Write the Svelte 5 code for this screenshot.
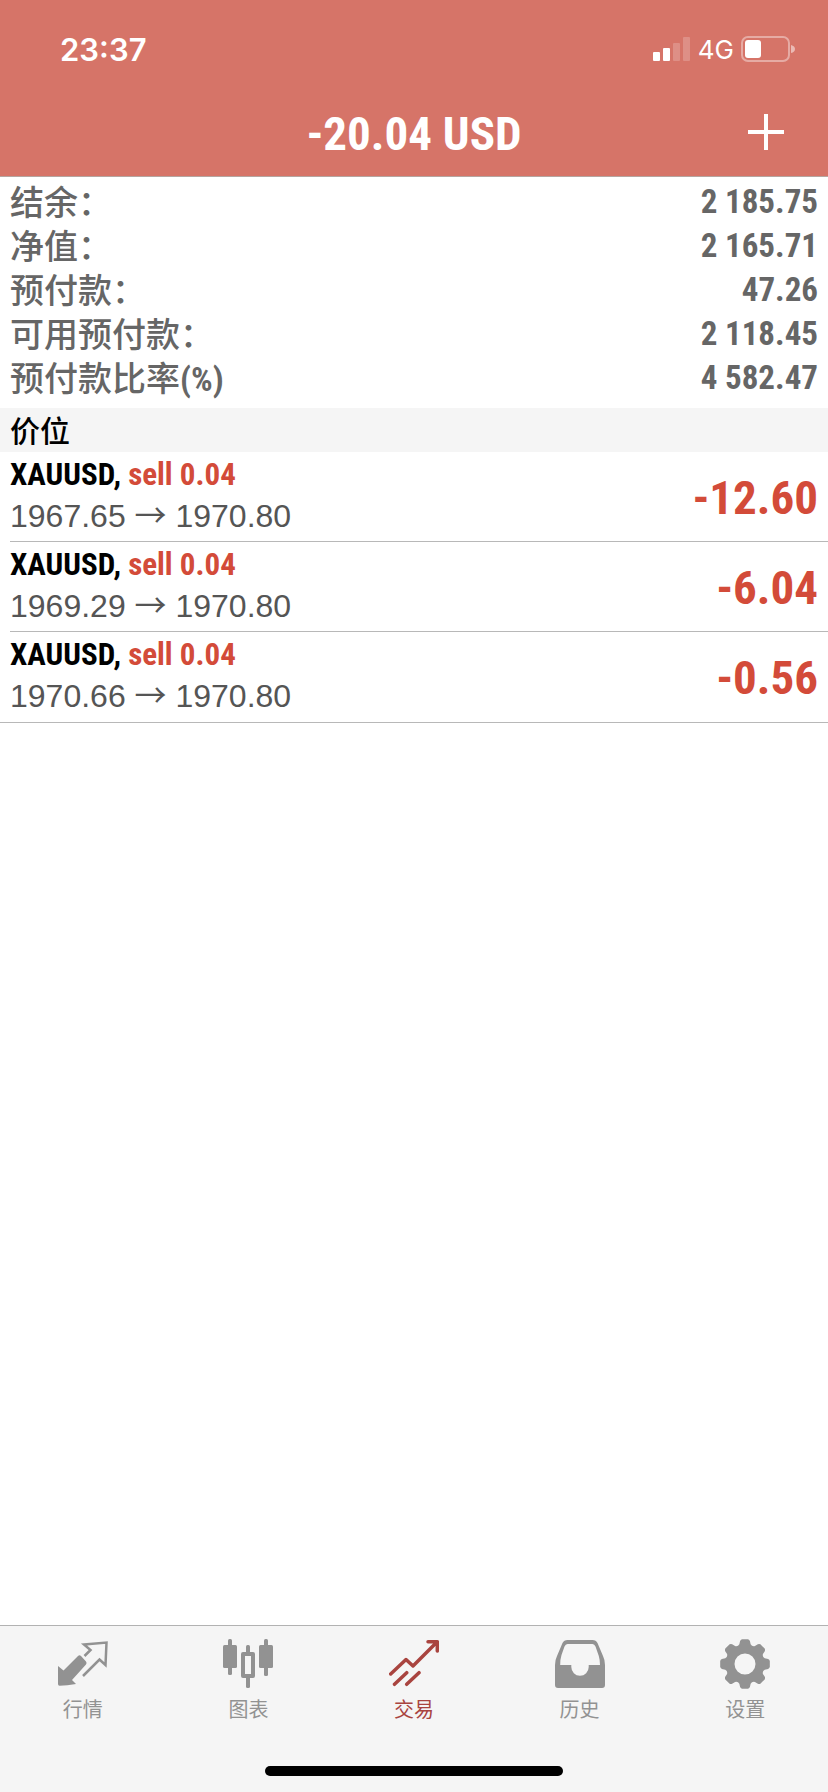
<script>
  const summary = [
    { label: '结余：', value: '2 185.75' },
    { label: '净值：', value: '2 165.71' },
    { label: '预付款：', value: '47.26' },
    { label: '可用预付款：', value: '2 118.45' },
    { label: '预付款比率', unit: '(%)', value: '4 582.47' }
  ];

  const positions = [
    { symbol: 'XAUUSD', side: 'sell', volume: '0.04', open: '1967.65', current: '1970.80', profit: '-12.60' },
    { symbol: 'XAUUSD', side: 'sell', volume: '0.04', open: '1969.29', current: '1970.80', profit: '-6.04' },
    { symbol: 'XAUUSD', side: 'sell', volume: '0.04', open: '1970.66', current: '1970.80', profit: '-0.56' }
  ];

  const tabs = [
    { id: 'quotes', label: '行情' },
    { id: 'charts', label: '图表' },
    { id: 'trade', label: '交易' },
    { id: 'history', label: '历史' },
    { id: 'settings', label: '设置' }
  ];

  let active = $state('trade');

  // Outline of an eight-toothed gear centred in a 50 x 50 box.
  function gearPath() {
    const at = (deg, r) => {
      const a = (deg * Math.PI) / 180;
      return `${(25 + r * Math.cos(a)).toFixed(2)} ${(25 + r * Math.sin(a)).toFixed(2)}`;
    };
    let d = '';
    for (let i = 0; i < 8; i++) {
      const c = i * 45;
      d += `${i ? 'L' : 'M'}${at(c - 16, 20.5)}L${at(c - 12, 23.6)}Q${at(c - 10, 24.8)} ${at(c - 7, 25)}`;
      d += `L${at(c + 7, 25)}Q${at(c + 10, 24.8)} ${at(c + 12, 23.6)}L${at(c + 16, 20.5)}`;
      d += `Q${at(c + 22.5, 18.6)} ${at(c + 29, 20.5)}`;
    }
    return d + 'ZM35.5 25a10.5 10.5 0 1 0-21 0a10.5 10.5 0 1 0 21 0Z';
  }
</script>

<div class="app">
  <header>
    <div class="status">
      <span class="time">23:37</span>
      <div class="indicators">
        <svg width="38" height="24" viewBox="0 0 38 24" fill="#fff" aria-hidden="true">
          <rect x="0" y="15" width="7" height="9" rx="1" />
          <rect x="10" y="11" width="7" height="13" rx="1" />
          <rect x="20" y="6" width="7" height="18" rx="1" opacity=".2" />
          <rect x="30" y="0" width="7" height="24" rx="1" opacity=".2" />
        </svg>
        <span class="network">4G</span>
        <svg width="54" height="26" viewBox="0 0 54 26" fill="#fff" aria-hidden="true">
          <rect x="1" y="1" width="47" height="24" rx="6" fill="none" stroke="#fff" stroke-opacity=".4" stroke-width="2" />
          <rect x="4" y="4" width="16" height="18" rx="3" />
          <path d="M50 9q4 1 4 4t-4 4z" opacity=".5" />
        </svg>
      </div>
    </div>
    <div class="titlebar">
      <h1>-20.04 USD</h1>
      <button class="add" aria-label="新订单">
        <svg width="36" height="36" viewBox="0 0 36 36" stroke="#fff" stroke-width="4" aria-hidden="true">
          <path d="M18 0v36M0 18h36" />
        </svg>
      </button>
    </div>
  </header>

  <main>
    <dl>
      {#each summary as row}
        <div class="row">
          <dt>{row.label}{#if row.unit}<span class="unit">{row.unit}</span>{/if}</dt>
          <dd>{row.value}</dd>
        </div>
      {/each}
    </dl>

    <h2>价位</h2>
    <ul>
      {#each positions as p}
        <li>
          <div class="position">
            <div class="info">
              <div class="symbol">{p.symbol}, <span class="loss">{p.side} {p.volume}</span></div>
              <div class="prices">{p.open} <span class="arrow">→</span> {p.current}</div>
            </div>
            <div class="profit loss">{p.profit}</div>
          </div>
        </li>
      {/each}
    </ul>
  </main>

  <footer>
    <nav>
      {#each tabs as tab}
        <button class="tab" class:active={active === tab.id} onclick={() => (active = tab.id)}>
          <svg width="50" height="50" viewBox="0 0 50 50" fill="currentColor" aria-hidden="true">
            {#if tab.id === 'quotes'}
              <path d="M0 27L5.5 31.5L20 17Q21.5 15.5 23 17L28 22.5Q29.2 24 28 25.5L14 41L18 45Q9 46.8 1.500 46.800Q0 46.800 0 45Z" />
              <path d="M26.500 17L32.500 11L26 5.500L48.500 3.500L47.500 26L41.500 20.500L25 37" fill="none" stroke="currentColor" stroke-width="2.500" />
            {:else if tab.id === 'charts'}
              <rect x="0" y="6" width="14" height="23" rx="1.500" />
              <rect x="5" y="0" width="4" height="36" rx="1.500" />
              <rect x="20" y="15" width="10" height="22" fill="none" stroke="currentColor" stroke-width="4" stroke-linejoin="round" />
              <rect x="23" y="6" width="4" height="9" rx="1.500" />
              <rect x="23" y="37" width="4" height="12" rx="1.500" />
              <rect x="36" y="6" width="14" height="23" rx="1.500" />
              <rect x="41" y="0" width="4" height="37" rx="1.500" />
            {:else if tab.id === 'trade'}
              <path
                d="M1.700 35L17 20.500L24 27L47.500 3.500M39 2.700H48.300V12M5.500 45.300L17.700 33.700M17.700 45.300L30 33.700"
                fill="none"
                stroke="currentColor"
                stroke-width="3.500"
                stroke-linecap="round"
                stroke-linejoin="round"
              />
            {:else if tab.id === 'history'}
              <path
                fill-rule="evenodd"
                d="M7.500 4Q9 1 12.500 1H37.500Q41 1 42.500 4L48 17Q50 21 50 26V46Q50 49 47 49H3Q0 49 0 46V26Q0 21 2 17ZM12.500 5Q10.500 5 9.500 7.500L6.500 16Q5.200 20 5.200 26H16.300V28A8.700 8.700 0 0 0 33.700 28V26H45Q45 21 43.800 17L40.500 7.500Q39.500 5 37.500 5Z"
              />
            {:else}
              <path fill-rule="evenodd" d={gearPath()} />
            {/if}
          </svg>
          <span>{tab.label}</span>
        </button>
      {/each}
    </nav>
    <div class="home"></div>
  </footer>
</div>

<style>
  :global(body) {
    background: #fff;
  }

  .app {
    --condensed: 'Roboto Condensed', 'Liberation Sans', 'Noto Sans CJK SC', sans-serif;
    display: flex;
    flex-direction: column;
    min-height: 100vh;
    font-family: 'Liberation Sans', 'Noto Sans CJK SC', sans-serif;
    color: #000;
  }

  h1,
  h2,
  dl,
  dd,
  ul {
    margin: 0;
    padding: 0;
  }

  button {
    border: 0;
    padding: 0;
    background: none;
    color: inherit;
    font: inherit;
  }

  header {
    background: #d67468;
    border-bottom: 1px solid #b5a5a0;
    color: #fff;
  }

  .status {
    display: flex;
    align-items: center;
    justify-content: space-between;
    height: 60px;
    padding: 19px 33px 9px 60px;
    font-family: Inter, sans-serif;
  }

  .time {
    font-size: 31px;
    font-weight: 600;
  }

  .indicators {
    display: flex;
    align-items: center;
    gap: 7px;
  }

  .network {
    font-size: 26px;
    font-weight: 400;
  }

  .titlebar {
    display: grid;
    grid-template-columns: 1fr auto 1fr;
    align-items: center;
    height: 88px;
    padding: 0 44px;
  }

  h1 {
    grid-column: 2;
    padding-top: 4px;
    font: 700 47px/84px var(--condensed);
  }

  .add {
    justify-self: end;
    display: flex;
  }

  dl {
    padding: 3px 10px 8px;
    color: #666;
  }

  .row {
    display: flex;
    justify-content: space-between;
    height: 44px;
    line-height: 44px;
    font-size: 34px;
  }

  dt {
    font-family: 'Noto Sans CJK SC', sans-serif;
    font-weight: 500;
    line-height: 42px;
  }

  .unit,
  dd {
    font-family: var(--condensed);
    font-weight: 700;
  }

  dd {
    font-size: 33px;
  }

  h2 {
    padding: 0 10px 2px;
    background: #f5f5f5;
    font: 500 30px/42px 'Noto Sans CJK SC', sans-serif;
  }

  ul {
    list-style: none;
    border-bottom: 1px solid #b8b8b8;
  }

  li {
    padding-left: 10px;
  }

  .position {
    display: flex;
    align-items: center;
    justify-content: space-between;
    padding: 2px 10px 3px 0;
    border-bottom: 1px solid #b8b8b8;
  }

  li:last-child .position {
    border-bottom: 0;
    padding-bottom: 4px;
  }

  .symbol {
    font: 700 31px/42px var(--condensed);
  }

  .prices {
    padding-bottom: 2px;
    font-size: 32px;
    line-height: 40px;
    color: #555;
  }

  .arrow {
    font-family: 'Noto Sans CJK SC', sans-serif;
    line-height: 1;
  }

  .profit {
    padding-top: 4px;
    font: 700 47px/80px var(--condensed);
  }

  .loss {
    color: #d34b39;
  }

  main {
    flex: 1;
  }

  footer {
    display: flex;
    flex-direction: column;
    align-items: center;
    gap: 45px;
    padding: 13px 0 16px;
    background: #f5f5f5;
    border-top: 1px solid #b2b2b2;
  }

  nav {
    display: flex;
    align-self: stretch;
  }

  .tab {
    flex: 1;
    display: flex;
    flex-direction: column;
    align-items: center;
    gap: 8px;
    color: #929292;
    font: 400 20px/24px 'Noto Sans CJK SC', sans-serif;
  }

  .tab.active {
    color: #a9443f;
  }

  .home {
    width: 36%;
    height: 10px;
    border-radius: 5px;
    background: #000;
  }
</style>
